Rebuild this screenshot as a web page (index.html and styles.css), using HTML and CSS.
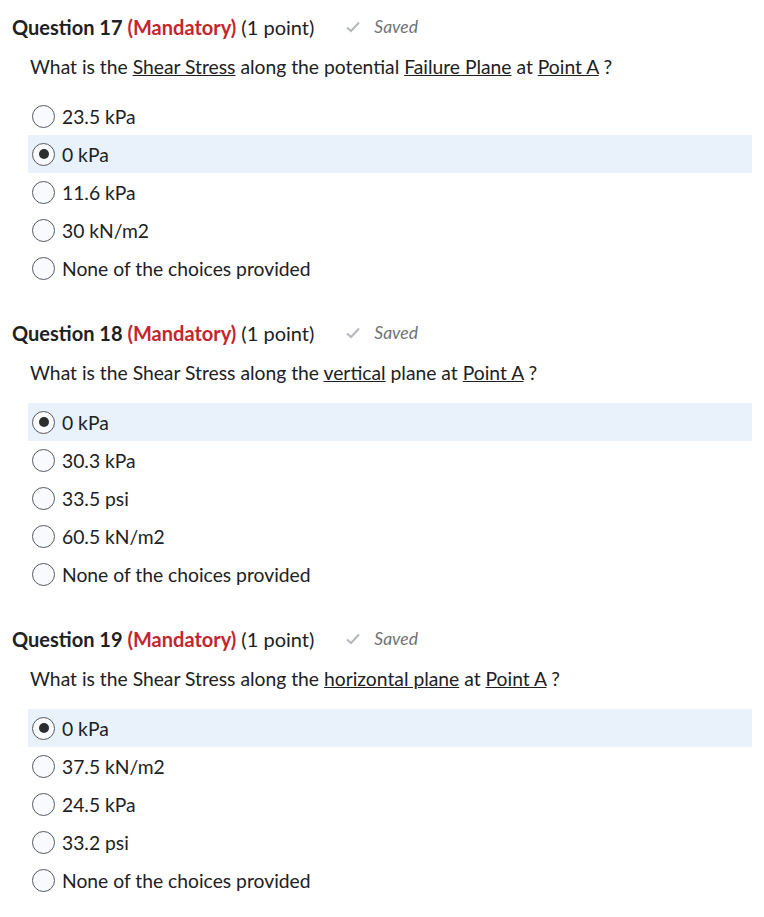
FILE: index.html
```html
<!DOCTYPE html>
<html lang="en">
<head>
    <meta charset="UTF-8">
    <title>Quiz</title>
    <link rel="stylesheet" href="styles.css">
</head>
<body>
    <!-- Question 17 -->
    <div class="question">
        <div class="q-head">
            <span class="q-title">Question 17</span>
            <span class="q-mand">(Mandatory)</span>
            <span class="q-points">(1 point)</span>
            <span class="q-saved"><svg width="16" height="12" viewBox="0 0 16 12"><path d="M2 6.5 L6 10 L14 1.5" fill="none" stroke="#b5b9bd" stroke-width="2"/></svg><i>Saved</i></span>
        </div>
        <p class="q-text">What is the <u>Shear Stress</u> along the potential <u>Failure Plane</u> at <u>Point A</u> ?</p>
        <div class="choices">
            <label class="choice"><span class="radio"></span>23.5 kPa</label>
            <label class="choice selected"><span class="radio checked"></span>0 kPa</label>
            <label class="choice"><span class="radio"></span>11.6 kPa</label>
            <label class="choice"><span class="radio"></span>30 kN/m2</label>
            <label class="choice"><span class="radio"></span>None of the choices provided</label>
        </div>
    </div>

    <!-- Question 18 -->
    <div class="question">
        <div class="q-head">
            <span class="q-title">Question 18</span>
            <span class="q-mand">(Mandatory)</span>
            <span class="q-points">(1 point)</span>
            <span class="q-saved"><svg width="16" height="12" viewBox="0 0 16 12"><path d="M2 6.5 L6 10 L14 1.5" fill="none" stroke="#b5b9bd" stroke-width="2"/></svg><i>Saved</i></span>
        </div>
        <p class="q-text">What is the Shear Stress along the <u>vertical</u> plane at <u>Point A</u> ?</p>
        <div class="choices">
            <label class="choice selected"><span class="radio checked"></span>0 kPa</label>
            <label class="choice"><span class="radio"></span>30.3 kPa</label>
            <label class="choice"><span class="radio"></span>33.5 psi</label>
            <label class="choice"><span class="radio"></span>60.5 kN/m2</label>
            <label class="choice"><span class="radio"></span>None of the choices provided</label>
        </div>
    </div>

    <!-- Question 19 -->
    <div class="question">
        <div class="q-head">
            <span class="q-title">Question 19</span>
            <span class="q-mand">(Mandatory)</span>
            <span class="q-points">(1 point)</span>
            <span class="q-saved"><svg width="16" height="12" viewBox="0 0 16 12"><path d="M2 6.5 L6 10 L14 1.5" fill="none" stroke="#b5b9bd" stroke-width="2"/></svg><i>Saved</i></span>
        </div>
        <p class="q-text">What is the Shear Stress along the <u>horizontal plane</u> at <u>Point A</u> ?</p>
        <div class="choices">
            <label class="choice selected"><span class="radio checked"></span>0 kPa</label>
            <label class="choice"><span class="radio"></span>37.5 kN/m2</label>
            <label class="choice"><span class="radio"></span>24.5 kPa</label>
            <label class="choice"><span class="radio"></span>33.2 psi</label>
            <label class="choice"><span class="radio"></span>None of the choices provided</label>
        </div>
    </div>
</body>
</html>
```

FILE: styles.css
```css
body {
    font-family: Lato, "Liberation Sans", sans-serif;
    margin: 0;
    padding: 14px 12px 0 12px;
    background-color: #fff;
    color: #202122;
}

.question {
    height: 306px;
}

.q-head {
    display: flex;
    align-items: baseline;
    font-size: 20px;
    line-height: 26px;
}

.q-title {
    font-weight: bold;
}

.q-mand {
    font-weight: bold;
    color: #c4262e;
    margin-left: 5px;
}

.q-points {
    margin-left: 5px;
}

.q-saved {
    margin-left: 31px;
    font-size: 17.5px;
    color: #6e7376;
    display: flex;
    align-items: center;
    gap: 13px;
    align-self: center;
}

.q-text {
    margin: 0;
    padding: 14px 0 0 18px;
    font-size: 19.3px;
    line-height: 26px;
    color: #202122;
}

.choices {
    margin: 17px 0 0 16px;
    width: 724px;
}

.choice {
    display: flex;
    align-items: center;
    height: 38px;
    font-size: 19.3px;
    color: #202122;
}

.choice.selected {
    background-color: #e9f1fb;
}

.radio {
    width: 21px;
    height: 21px;
    border: 1px solid #565a5c;
    border-radius: 50%;
    background-color: #f9fafe;
    margin-left: 4px;
    margin-right: 7px;
    position: relative;
    box-sizing: content-box;
}

.radio.checked::after {
    content: "";
    position: absolute;
    width: 10px;
    height: 10px;
    border-radius: 50%;
    background-color: #2b2d2f;
    left: 5.5px;
    top: 5.5px;
}
```
